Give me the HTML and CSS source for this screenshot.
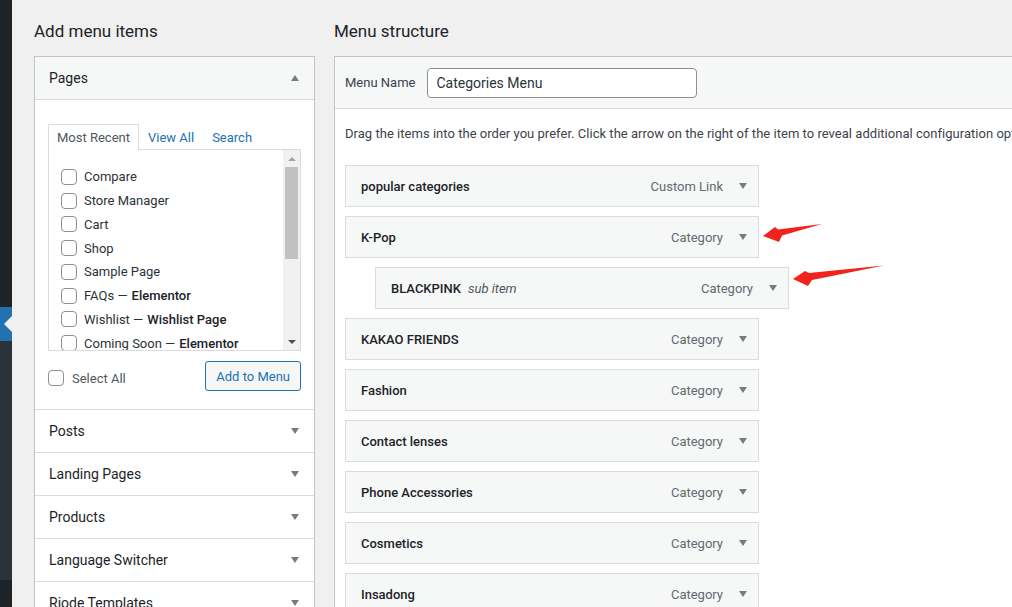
FILE: index.html
```html
<!DOCTYPE html>
<html lang="en">
<head>
    <meta charset="UTF-8">
    <title>Menus</title>
    <link rel="stylesheet" href="styles.css">
</head>
<body>
    <div class="adminmenu">
        <div class="am-top"></div>
        <div class="am-current"><span class="notch"></span></div>
        <div class="am-sub"></div>
        <div class="am-bottom"></div>
    </div>

    <div class="wrap">
        <div class="col-left">
            <h2>Add menu items</h2>
            <div class="accordion">
                <div class="acc-section open">
                    <div class="acc-title">Pages <span class="acc-arrow up"></span></div>
                    <div class="acc-content">
                        <ul class="tabs">
                            <li class="active">Most Recent</li>
                            <li>View All</li>
                            <li>Search</li>
                        </ul>
                        <div class="tab-panel">
                            <ul class="checklist">
                                <li><span class="cb"></span>Compare</li>
                                <li><span class="cb"></span>Store Manager</li>
                                <li><span class="cb"></span>Cart</li>
                                <li><span class="cb"></span>Shop</li>
                                <li><span class="cb"></span>Sample Page</li>
                                <li><span class="cb"></span>FAQs — <span class="state">Elementor</span></li>
                                <li><span class="cb"></span>Wishlist — <span class="state">Wishlist Page</span></li>
                                <li><span class="cb"></span>Coming Soon — <span class="state">Elementor</span></li>
                            </ul>
                            <div class="scrollbar">
                                <span class="sb-up"></span>
                                <div class="sb-track"><div class="sb-thumb"></div></div>
                                <span class="sb-down"></span>
                            </div>
                        </div>
                        <div class="add-row">
                            <label class="select-all"><span class="cb"></span>Select All</label>
                            <button class="button">Add to Menu</button>
                        </div>
                    </div>
                </div>
                <div class="acc-section"><div class="acc-title">Posts <span class="acc-arrow"></span></div></div>
                <div class="acc-section"><div class="acc-title">Landing Pages <span class="acc-arrow"></span></div></div>
                <div class="acc-section"><div class="acc-title">Products <span class="acc-arrow"></span></div></div>
                <div class="acc-section"><div class="acc-title">Language Switcher <span class="acc-arrow"></span></div></div>
                <div class="acc-section"><div class="acc-title">Riode Templates <span class="acc-arrow"></span></div></div>
            </div>
        </div>

        <div class="col-right">
            <h2>Menu structure</h2>
            <div class="menu-edit">
                <div class="menu-header">
                    <label class="menu-name">Menu Name</label>
                    <input class="menu-input" type="text" value="Categories Menu">
                </div>
                <div class="menu-body">
                    <p class="drag-info">Drag the items into the order you prefer. Click the arrow on the right of the item to reveal additional configuration options.</p>
                    <ul class="menu">
                        <li class="menu-item"><span class="item-title">popular categories</span><span class="item-type">Custom Link</span><span class="item-arrow"></span></li>
                        <li class="menu-item"><span class="item-title">K-Pop</span><span class="item-type">Category</span><span class="item-arrow"></span></li>
                        <li class="menu-item depth-1"><span class="item-title">BLACKPINK</span><span class="sub-note">sub item</span><span class="item-type">Category</span><span class="item-arrow"></span></li>
                        <li class="menu-item"><span class="item-title">KAKAO FRIENDS</span><span class="item-type">Category</span><span class="item-arrow"></span></li>
                        <li class="menu-item"><span class="item-title">Fashion</span><span class="item-type">Category</span><span class="item-arrow"></span></li>
                        <li class="menu-item"><span class="item-title">Contact lenses</span><span class="item-type">Category</span><span class="item-arrow"></span></li>
                        <li class="menu-item"><span class="item-title">Phone Accessories</span><span class="item-type">Category</span><span class="item-arrow"></span></li>
                        <li class="menu-item"><span class="item-title">Cosmetics</span><span class="item-type">Category</span><span class="item-arrow"></span></li>
                        <li class="menu-item"><span class="item-title">Insadong</span><span class="item-type">Category</span><span class="item-arrow"></span></li>
                    </ul>
                </div>
            </div>
        </div>
    </div>

    <!-- screenshot annotation arrows -->
    <svg class="annotations" width="1012" height="607" viewBox="0 0 1012 607">
        <polygon points="763,236 775,227 778,229.5 822,224 782,235.5 779,242" fill="#f2231a"/>
        <polygon points="793,279 805,271 809,273 884,265.5 812,280 808,286" fill="#f2231a"/>
    </svg>
</body>
</html>
```

FILE: styles.css
```css
/* Base */
body {
    margin: 0;
    display: flex;
    height: 607px;
    overflow: hidden;
    background: #f0f0f1;
    color: #3c434a;
    font-family: Roboto, "Liberation Sans", sans-serif;
    font-size: 13px;
    position: relative;
}

ul {
    list-style: none;
    margin: 0;
    padding: 0;
}

h2 {
    font-size: 17px;
    font-weight: 400;
    color: #1d2327;
    line-height: 20px;
    margin: 21px 0 15px;
}

/* Admin menu strip */
.adminmenu {
    width: 12px;
    flex-shrink: 0;
    display: flex;
    flex-direction: column;
}

.am-top { height: 307px; background: #1d2327; }
.am-current {
    height: 34px;
    background: #2271b1;
    position: relative;
}
.am-sub { height: 239px; background: #2c3338; }
.am-bottom { flex: 1; background: #1d2327; }

.notch {
    position: absolute;
    right: 0;
    top: 9px;
    border-style: solid;
    border-width: 8px 8px 8px 0;
    border-color: transparent #f0f0f1 transparent transparent;
}

/* Columns */
.wrap {
    display: flex;
    gap: 19px;
    padding-left: 22px;
}

.col-left {
    width: 281px;
    flex-shrink: 0;
}

.col-right {
    width: 760px;
    flex-shrink: 0;
}

/* Accordion */
.accordion {
    border: 1px solid #c3c4c7;
    border-bottom: none;
    background: #fff;
}

.acc-section {
    border-bottom: 1px solid #dcdcde;
}

.acc-title {
    height: 42px;
    display: flex;
    align-items: center;
    justify-content: space-between;
    padding: 0 14px;
    font-size: 14px;
    color: #1d2327;
}

.open .acc-title {
    background: #f6f7f7;
    border-bottom: 1px solid #dcdcde;
}

.acc-arrow {
    border-style: solid;
    border-width: 6px 4.5px 0;
    border-color: #787c82 transparent transparent;
    margin-right: 1px;
}

.acc-arrow.up {
    border-width: 0 4.5px 6px;
    border-color: transparent transparent #787c82;
}

.acc-content {
    padding: 24px 13px 18px;
}

/* Tabs */
.tabs {
    display: flex;
    height: 26px;
    position: relative;
    z-index: 1;
}

.tabs li {
    padding: 0 8px;
    line-height: 25px;
    border: 1px solid transparent;
    border-bottom: none;
    color: #2271b1;
}

.tabs li.active {
    color: #50575e;
    background: #fff;
    border-color: #dcdcde;
}

.tab-panel {
    display: flex;
    height: 200px;
    border: 1px solid #dcdcde;
    margin-top: -1px;
}

.checklist {
    flex: 1;
    overflow: hidden;
    padding: 15px 0 0 12px;
}

.checklist li {
    display: flex;
    align-items: center;
    height: 23.75px;
    color: #2c3338;
    white-space: nowrap;
}

.checklist .state {
    font-weight: 500;
    color: #1d2327;
    margin-left: 4px;
}

.cb {
    width: 14px;
    height: 14px;
    border: 1px solid #8c8f94;
    border-radius: 4px;
    background: #fff;
    margin-right: 7px;
    flex-shrink: 0;
}

/* Scrollbar */
.scrollbar {
    width: 17px;
    display: flex;
    flex-direction: column;
    background: #f1f1f1;
}

.sb-up,
.sb-down {
    height: 17px;
    display: flex;
    align-items: center;
    justify-content: center;
}

.sb-up::before {
    content: '';
    border-style: solid;
    border-width: 0 4px 4px;
    border-color: transparent transparent #a3a3a3;
}

.sb-down::before {
    content: '';
    border-style: solid;
    border-width: 4px 4px 0;
    border-color: #505050 transparent transparent;
}

.sb-track {
    flex: 1;
    padding: 0 2px;
}

.sb-thumb {
    height: 92px;
    background: #c1c1c1;
}

/* Add row */
.add-row {
    display: flex;
    justify-content: space-between;
    align-items: center;
    margin-top: 10px;
}

.select-all {
    display: flex;
    align-items: center;
    color: #50575e;
    margin-top: 4px;
}

.select-all .cb {
    margin-right: 8px;
}

.button {
    height: 30px;
    padding: 0 10px;
    font-family: inherit;
    font-size: 13px;
    color: #2271b1;
    background: #f6f7f7;
    border: 1px solid #2271b1;
    border-radius: 3px;
}

/* Menu structure */
.menu-edit {
    border: 1px solid #c3c4c7;
    border-right: none;
    background: #fff;
    height: 600px;
}

.menu-header {
    display: flex;
    align-items: center;
    height: 51px;
    padding-left: 10px;
    background: #f6f7f7;
    border-bottom: 1px solid #dcdcde;
}

.menu-name {
    color: #3c434a;
    margin-right: 12px;
}

.menu-input {
    width: 270px;
    height: 30px;
    box-sizing: border-box;
    padding: 0 8px;
    border: 1px solid #8c8f94;
    border-radius: 4px;
    font-family: inherit;
    font-size: 14px;
    color: #2c3338;
}

.menu-body {
    padding: 0 10px;
}

.drag-info {
    margin: 16px 0 22px;
    line-height: 18px;
    white-space: nowrap;
    color: #3c434a;
    letter-spacing: 0.03px;
}

.menu-item {
    width: 414px;
    height: 42px;
    box-sizing: border-box;
    display: flex;
    align-items: center;
    padding-left: 15px;
    margin-bottom: 9px;
    background: #f6f7f7;
    border: 1px solid #dcdcde;
}

.menu-item.depth-1 {
    margin-left: 30px;
}

.item-title {
    font-weight: 500;
    color: #1d2327;
}

.sub-note {
    font-style: italic;
    color: #50575e;
    margin-left: 7px;
}

.item-type {
    margin-left: auto;
    color: #646970;
}

.item-arrow {
    border-style: solid;
    border-width: 6px 4.5px 0;
    border-color: #787c82 transparent transparent;
    margin: 0 11px 0 16px;
}

/* Annotations drawn over the screenshot */
.annotations {
    position: absolute;
    top: 0;
    left: 0;
    pointer-events: none;
}
```
